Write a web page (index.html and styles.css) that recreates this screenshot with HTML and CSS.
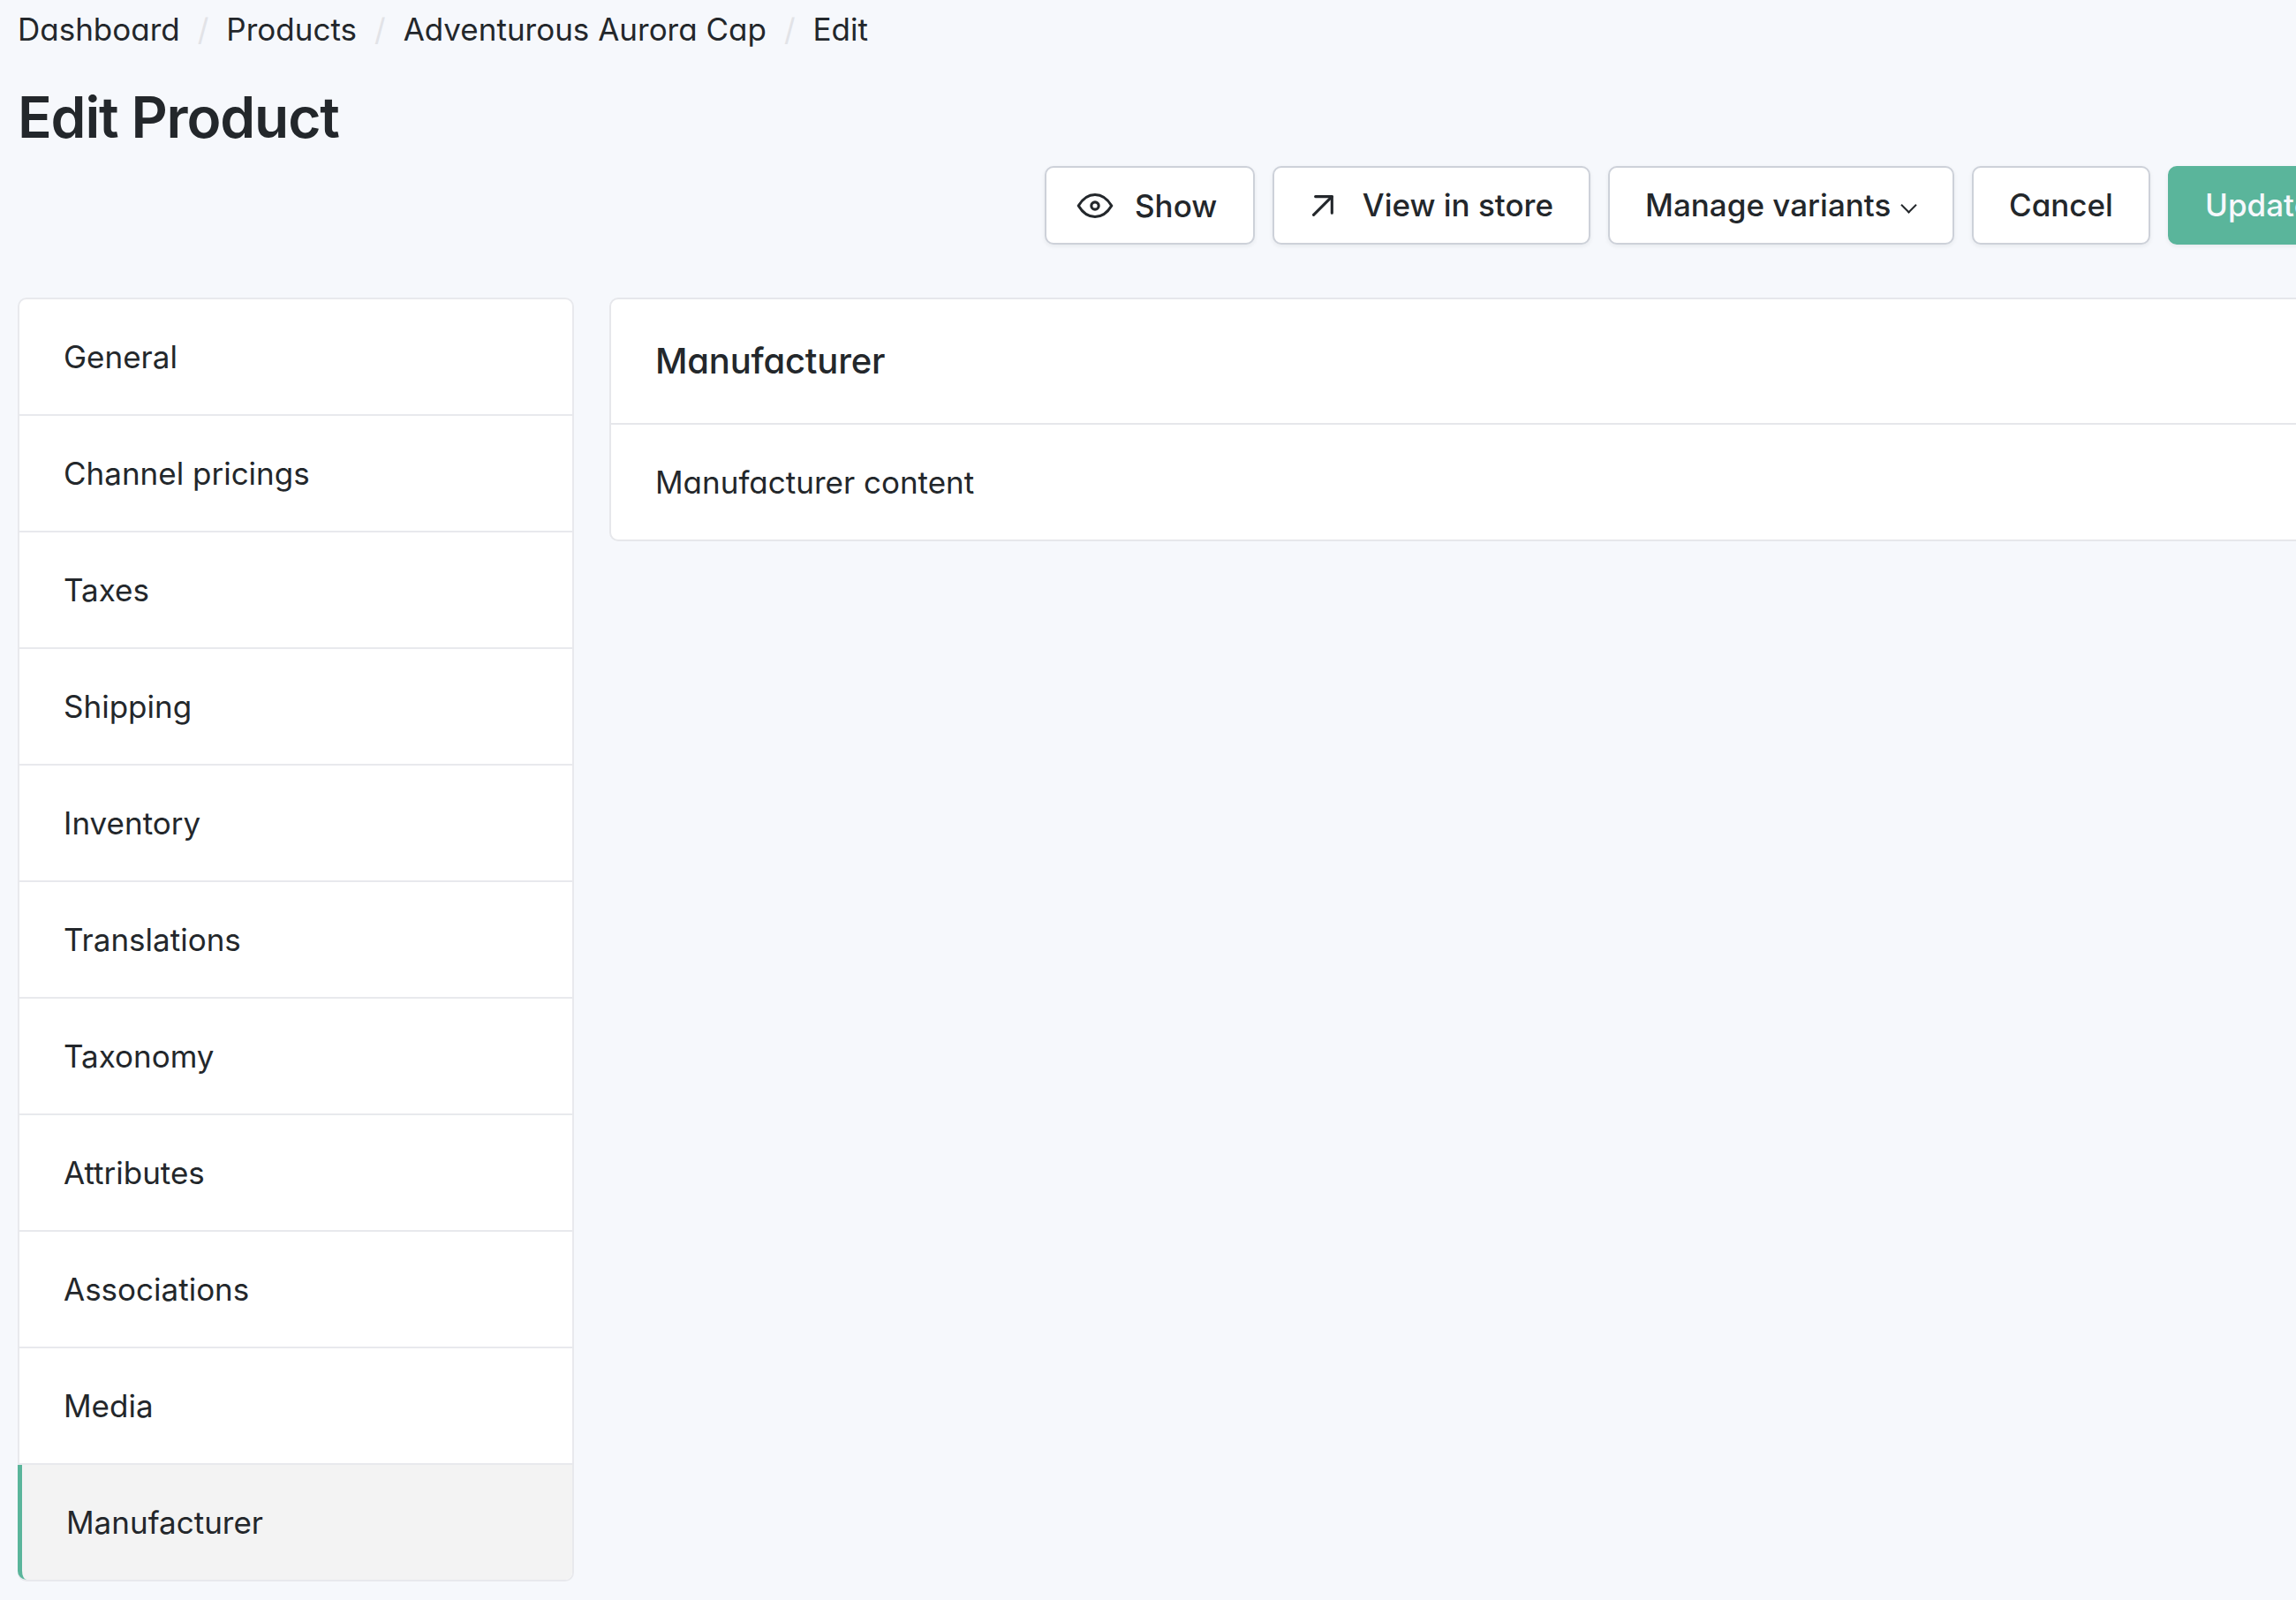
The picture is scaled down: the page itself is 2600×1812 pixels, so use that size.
FILE: index.html
```html
<!DOCTYPE html>
<html lang="en">
<head>
<meta charset="utf-8">
<title>Edit Product</title>
<link rel="stylesheet" href="styles.css">
</head>
<body>
<nav class="breadcrumb">
  <a class="crumb">Dashboard</a><a class="crumb">Products</a><a class="crumb">Adventurous Aurora Cap</a><a class="crumb">Edit</a>
</nav>
<h1 class="title">Edit Product</h1>
<div class="actions">
  <button class="btn btn-show">
    <svg class="icon" viewBox="0 0 24 24"><path d="M10 12a2 2 0 1 0 4 0a2 2 0 0 0 -4 0"/><path d="M21 12c-2.4 4 -5.4 6 -9 6c-3.600 0 -6.600 -2 -9 -6c2.400 -4 5.400 -6 9 -6c3.600 0 6.600 2 9 6"/></svg>
    <span>Show</span>
  </button>
  <button class="btn btn-view">
    <svg class="icon" viewBox="0 0 24 24"><path d="M17 7l-10 10"/><path d="M8 7l9 0l0 9"/></svg>
    <span>View in store</span>
  </button>
  <button class="btn btn-manage"><span>Manage variants</span><i class="caret"></i></button>
  <button class="btn btn-cancel">Cancel</button>
  <button class="btn btn-update">Update</button>
</div>
<main class="layout">
  <div class="tabs">
    <a class="tab">General</a>
    <a class="tab">Channel pricings</a>
    <a class="tab">Taxes</a>
    <a class="tab">Shipping</a>
    <a class="tab">Inventory</a>
    <a class="tab">Translations</a>
    <a class="tab">Taxonomy</a>
    <a class="tab">Attributes</a>
    <a class="tab">Associations</a>
    <a class="tab">Media</a>
    <a class="tab active">Manufacturer</a>
  </div>
  <section class="card">
    <h3 class="card-title">Manufacturer</h3>
    <div class="card-body">Manufacturer content</div>
  </section>
</main>
</body>
</html>
```
FILE: styles.css
```css
* { box-sizing: border-box; }
html { overflow: hidden; }
body {
  margin: 0;
  padding: 8px 0 0 20px;
  height: 1812px;
  overflow: hidden;
  background: #f6f8fc;
  color: #23272b;
  font: 400 35px/50px Inter, sans-serif;
  font-feature-settings: "cv11";
}
.breadcrumb { display: flex; height: 50px; }
.crumb + .crumb::before {
  content: "/";
  padding: 0 20px;
  color: #e2e3e7;
}
.title {
  margin: 35px 0 0;
  font-size: 64px;
  line-height: 80px;
  font-weight: 600;
  letter-spacing: -1.14px;
}
.actions {
  display: flex;
  gap: 20px;
  margin: 15px 0 0 1163px;
}
.btn {
  display: flex;
  align-items: center;
  flex: none;
  height: 89px;
  padding: 0 40px 2px;
  border: 2px solid #cdd1d9;
  border-radius: 10px;
  background: #fff;
  box-shadow: 0 2px 5px rgba(35, 39, 43, .07);
  color: inherit;
  font: 500 35px/50px Inter, sans-serif;
  white-space: nowrap;
}
.btn-show { width: 238px; padding-bottom: 0; }
.btn-view { width: 360px; }
.btn-view .icon { margin-top: 2px; }
.btn-manage { width: 392px; }
.btn-cancel { width: 202px; font-feature-settings: "cv11"; }
.btn-update { width: 208px; background: #5ab59b; border-color: #5ab59b; color: #f6f8fc; }
.icon {
  width: 50px;
  height: 50px;
  margin: 0 20px 0 -10px;
  fill: none;
  stroke: currentColor;
  stroke-width: 1.5;
  stroke-linecap: round;
  stroke-linejoin: round;
}
.caret {
  width: 13px;
  height: 13px;
  margin: 1px 0 0 14px;
  border: solid currentColor;
  border-width: 0 2px 2px 0;
  transform: rotate(45deg);
}
.layout {
  display: grid;
  grid-template-columns: 630px 1fr;
  gap: 40px;
  align-items: start;
  margin-top: 60px;
}
.tabs {
  border: 2px solid #e8e9ed;
  border-radius: 10px;
  background: #fff;
  font-feature-settings: normal;
}
.tab {
  display: block;
  height: 132px;
  padding: 40px 50px;
  border-bottom: 2px solid #e8e9ed;
}
.tab.active {
  height: 130px;
  margin-left: -2px;
  border-bottom: 0;
  border-left: 5px solid #5ab59b;
  border-radius: 0 0 8px 10px;
  background: #f3f3f3;
}
.card {
  margin-right: -20px;
  border: 2px solid #e6e7eb;
  border-radius: 10px;
  background: #fff;
}
.card-title {
  height: 142px;
  margin: 0;
  padding: 45px 50px;
  border-bottom: 2px solid #e6e7eb;
  font-size: 40px;
  font-weight: 500;
  letter-spacing: -0.2px;
}
.card-body { padding: 40px 50px; }
```
